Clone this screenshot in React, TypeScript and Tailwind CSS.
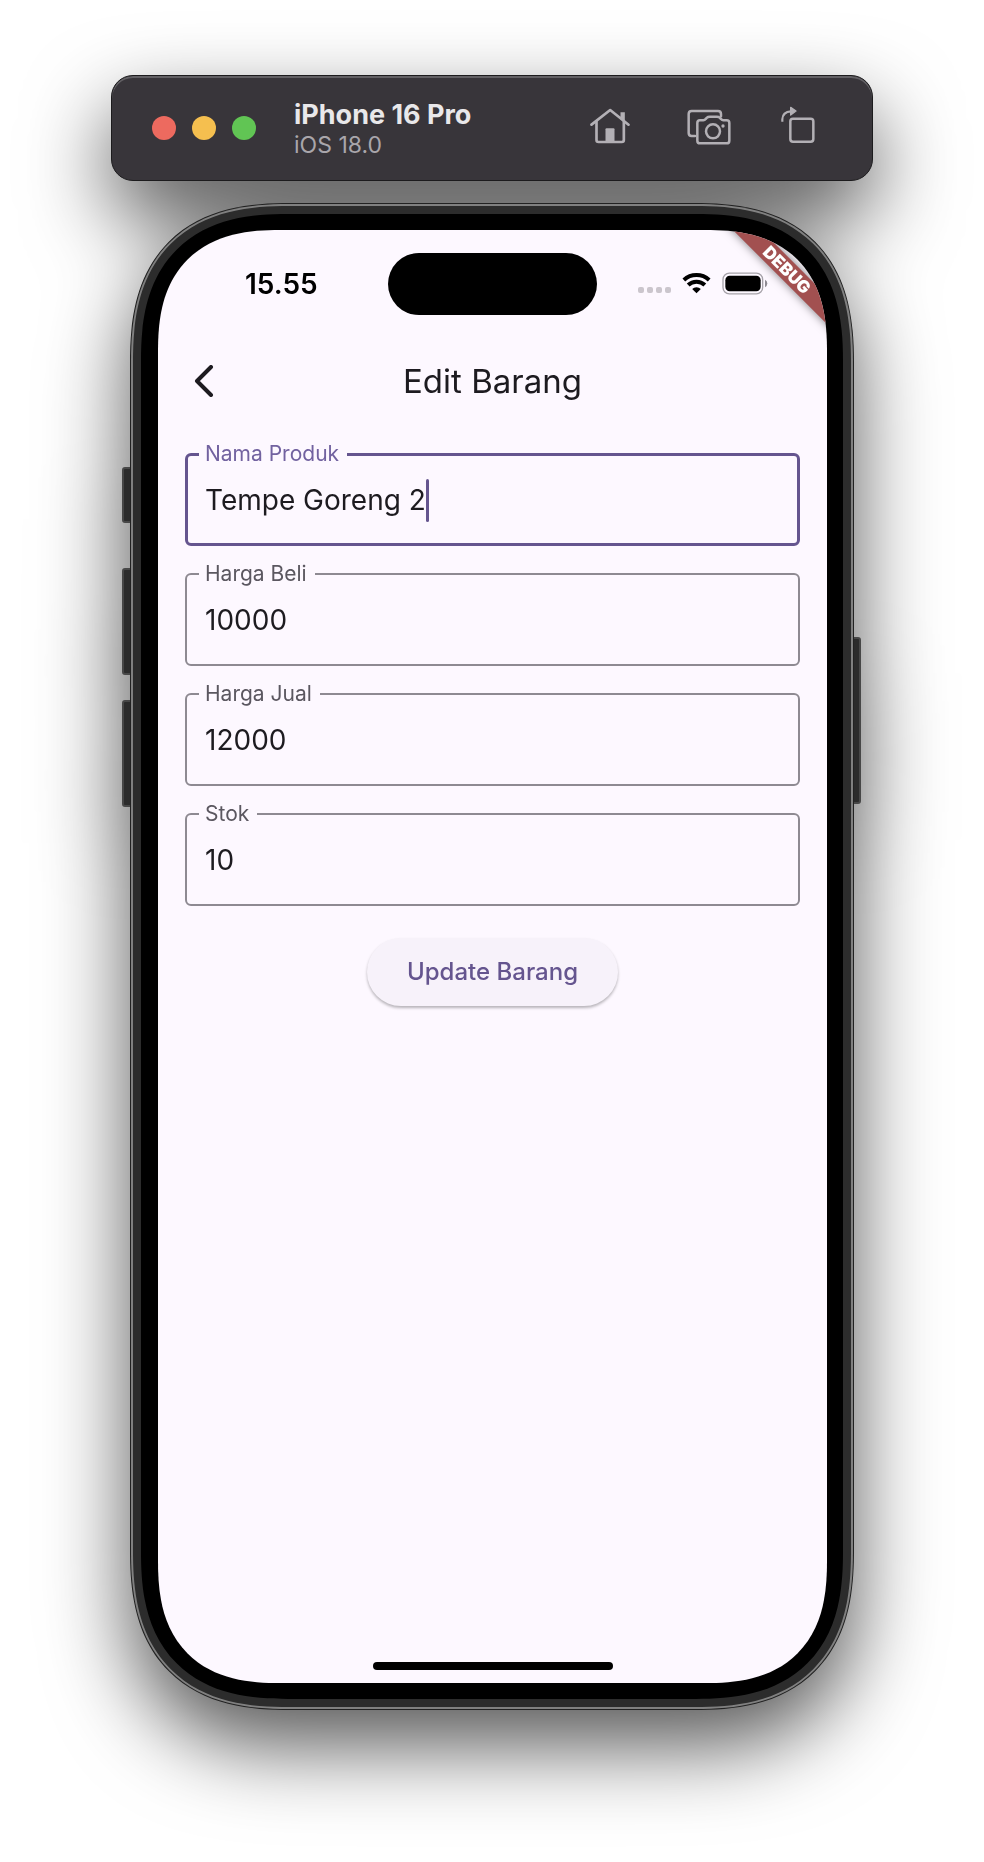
import React from "react";

type FieldProps = {
  id: string;
  label: string;
  value: string;
  active?: boolean;
};

function Field({ id, label, value, active = false }: FieldProps) {
  const [text, setText] = React.useState(value);
  return (
    <fieldset
      className={
        active
          ? "h-[104px] min-w-0 rounded-md border-[3px] border-[#65558f] pl-[11px]"
          : "h-[104px] min-w-0 rounded-md border-2 border-[#8e8a92] pl-3"
      }
    >
      <legend className="pl-1.5 pr-2">
        <label
          htmlFor={id}
          className={
            active
              ? "block text-[21px] leading-6 text-[#7262a0]"
              : "block text-[21px] leading-6 text-[#5b5760]"
          }
        >
          {label}
        </label>
      </legend>
      <div className="flex h-[68px] items-center px-1.5">
        <input
          id={id}
          value={text}
          onChange={(e) => setText(e.target.value)}
          className={
            active
              ? "field-sizing-content max-w-full bg-transparent text-[28px] leading-10 text-[#1d1b20] outline-none"
              : "w-full min-w-0 bg-transparent text-[28px] leading-10 text-[#1d1b20] outline-none"
          }
        />
        {active && <span className="h-[43px] w-[3px] shrink-0 rounded-full bg-[#65558f]" />}
      </div>
    </fieldset>
  );
}

function HomeIcon() {
  return (
    <svg viewBox="269 143 119 108" className="h-9 w-10" fill="none" stroke="currentColor" strokeWidth="8" strokeLinecap="round" strokeLinejoin="round">
      <path d="M273 193 329 149 384 193" />
      <path d="M288 184V239Q288 245 294 245H364Q370 245 370 239V184" />
      <path d="M360 156H373V184L360 174Z" fill="currentColor" stroke="none" />
      <path d="M315 207Q315 204 318 204H339Q342 204 342 207V246H315Z" fill="currentColor" stroke="none" />
    </svg>
  );
}

function CameraIcon() {
  return (
    <svg viewBox="562 146 132 108" className="h-9 w-11" fill="none" stroke="currentColor" strokeWidth="7.5" strokeLinecap="round" strokeLinejoin="round">
      <path d="M586 227H576Q567 227 567 218V161Q567 152 576 152H655Q664 152 664 161V168" />
      <path d="M601 180H611Q615 180 618 176L622 172Q625 169 630 169H652Q657 169 660 172L664 176Q667 180 671 180H681Q689 180 689 188V241Q689 249 681 249H601Q593 249 593 241V188Q593 180 601 180Z" />
      <circle cx="640" cy="213" r="21" />
      <circle cx="670" cy="197" r="5" fill="currentColor" stroke="none" />
    </svg>
  );
}

function RotateIcon() {
  return (
    <svg viewBox="845 136 102 111" className="h-[37px] w-[34px]" fill="none" stroke="currentColor" strokeWidth="7.5" strokeLinejoin="round">
      <rect x="873" y="174" width="69" height="69" rx="8" />
      <path d="M849 183V176Q850 153 875 152" strokeWidth="6.5" />
      <path d="M874 140 890 151 874 163Z" fill="currentColor" strokeWidth="4" />
    </svg>
  );
}

function WifiIcon() {
  return (
    <svg viewBox="246 245 86 66" className="h-[22px] w-[29px]" fill="none" stroke="#000" strokeWidth="12">
      <path d="M251 269A56 56 0 0 1 327 269" />
      <path d="M264 284A36 36 0 0 1 314 284" />
      <path d="M289 309 276 296A19 19 0 0 1 302 296Z" fill="#000" stroke="none" />
    </svg>
  );
}

function BatteryIcon() {
  return (
    <svg viewBox="368 245 138 68" className="h-[23px] w-[46px]">
      <rect x="371" y="248" width="119" height="62" rx="19" fill="none" stroke="#a5a1a8" strokeWidth="4" />
      <rect x="378" y="256" width="106" height="46" rx="13" fill="#000" />
      <path d="M497 268Q504 272 504 279T497 290Z" fill="#8e8a92" />
    </svg>
  );
}

function SimulatorBar() {
  return (
    <header className="flex h-[106px] w-full items-center rounded-[22px] border border-[#1c1b1d] bg-[#38353a] pl-10 pr-[57px] inset-shadow-[0_2px_0_#626064]">
      <div className="flex gap-4">
        <button aria-label="Close" className="size-6 rounded-full bg-[#ed6a5f]" />
        <button aria-label="Minimize" className="size-6 rounded-full bg-[#f5bf4f]" />
        <button aria-label="Zoom" className="size-6 rounded-full bg-[#61c554]" />
      </div>
      <div className="ml-[38px] grow pt-0.5">
        <h1 className="text-[27px] font-bold leading-8 text-[#e9e8ea]">iPhone 16 Pro</h1>
        <p className="text-[23px] leading-7 text-[#a9a6ab]">iOS 18.0</p>
      </div>
      <div className="flex items-center text-[#b3b0b5]">
        <button aria-label="Home" className="mb-1"><HomeIcon /></button>
        <button aria-label="Screenshot" className="mb-0.5 ml-[57px]"><CameraIcon /></button>
        <button aria-label="Rotate" className="mb-2 ml-[50px]"><RotateIcon /></button>
      </div>
    </header>
  );
}

const sideButton = "absolute -z-10 rounded-[3px] border-2 border-[#474747] bg-[#2b2b2b]";
const smoothCorner = "[corner-shape:superellipse(1.32)]";

export default function App() {
  return (
    <div className="min-h-screen bg-white px-6 pb-[151px] pt-[75px] font-['Inter','Liberation_Sans',sans-serif]">
      <div className="isolate mx-auto flex w-full max-w-[762px] flex-col items-center gap-[22px] drop-shadow-[0_36px_42px_rgba(0,0,0,0.66)]">
        <SimulatorBar />

        <div className={`${smoothCorner} relative w-full max-w-[724px] rounded-[160px] border border-[#222] bg-[#808080] p-0.5`}>
          <span className={`${sideButton} -left-[9px] top-[263px] h-[56px] w-3`} />
          <span className={`${sideButton} -left-[9px] top-[364px] h-[107px] w-3`} />
          <span className={`${sideButton} -left-[9px] top-[496px] h-[107px] w-3`} />
          <span className={`${sideButton} -right-[8px] top-[433px] h-[167px] w-3`} />

          <div className={`${smoothCorner} rounded-[156px] bg-[#2c2c2c] p-2`}>
            <div className={`${smoothCorner} rounded-[147px] bg-black py-4 pl-[17px] pr-4`}>
              <main className={`${smoothCorner} relative flex min-h-[1453px] flex-col overflow-hidden rounded-[122px] bg-[#fdf8ff]`}>
                <div className="grid grid-cols-[1fr_209px_1fr] items-center pt-[23px]">
                  <time className="pl-[87px] text-[28px] font-semibold leading-8 text-black">15.55</time>
                  <div className="h-[62px] rounded-full bg-black" />
                  <div className="flex items-center pl-[41px]">
                    <div className="mt-3 flex gap-[3px]">
                      <span className="size-1.5 rounded-xs bg-[#cbc6cd]" />
                      <span className="size-1.5 rounded-xs bg-[#cbc6cd]" />
                      <span className="size-1.5 rounded-xs bg-[#cbc6cd]" />
                      <span className="size-1.5 rounded-xs bg-[#cbc6cd]" />
                    </div>
                    <span className="mb-0.5 ml-[11px]"><WifiIcon /></span>
                    <span className="mb-0.5 ml-[11px]"><BatteryIcon /></span>
                  </div>
                </div>

                <div className="grid h-[127px] grid-cols-[1fr_auto_1fr] items-center pt-1">
                  <button aria-label="Back" className="ml-9 justify-self-start">
                    <svg viewBox="0 0 20 32" className="h-8 w-5" fill="none" stroke="#1d1b20" strokeWidth="4" strokeLinecap="round" strokeLinejoin="round">
                      <path d="M17 2 3 16l14 14" />
                    </svg>
                  </button>
                  <h2 className="text-[33px] leading-10 text-[#1d1b20]">Edit Barang</h2>
                </div>

                <form className="flex flex-col gap-4 px-[27px]" onSubmit={(e) => e.preventDefault()}>
                  <Field id="nama" label="Nama Produk" value="Tempe Goreng 2" active />
                  <Field id="beli" label="Harga Beli" value="10000" />
                  <Field id="jual" label="Harga Jual" value="12000" />
                  <Field id="stok" label="Stok" value="10" />
                  <button
                    type="submit"
                    className="mt-4 h-[68px] self-center rounded-full bg-[#f7f2fa] px-10 text-[24px] font-medium leading-8 text-[#65558f] shadow-[0_2px_3px_rgba(0,0,0,0.28)]"
                  >
                    Update Barang
                  </button>
                </form>

                <div className="mx-auto mb-[13px] mt-auto h-2 w-60 rounded-full bg-black" />

                <div className="absolute -right-[60px] top-[30px] w-[200px] rotate-45 bg-[#a25050] text-center text-[17px] font-black leading-5 text-white shadow-[0_0_10px_rgba(0,0,0,0.5)]">
                  DEBUG
                </div>
              </main>
            </div>
          </div>
        </div>
      </div>
    </div>
  );
}
